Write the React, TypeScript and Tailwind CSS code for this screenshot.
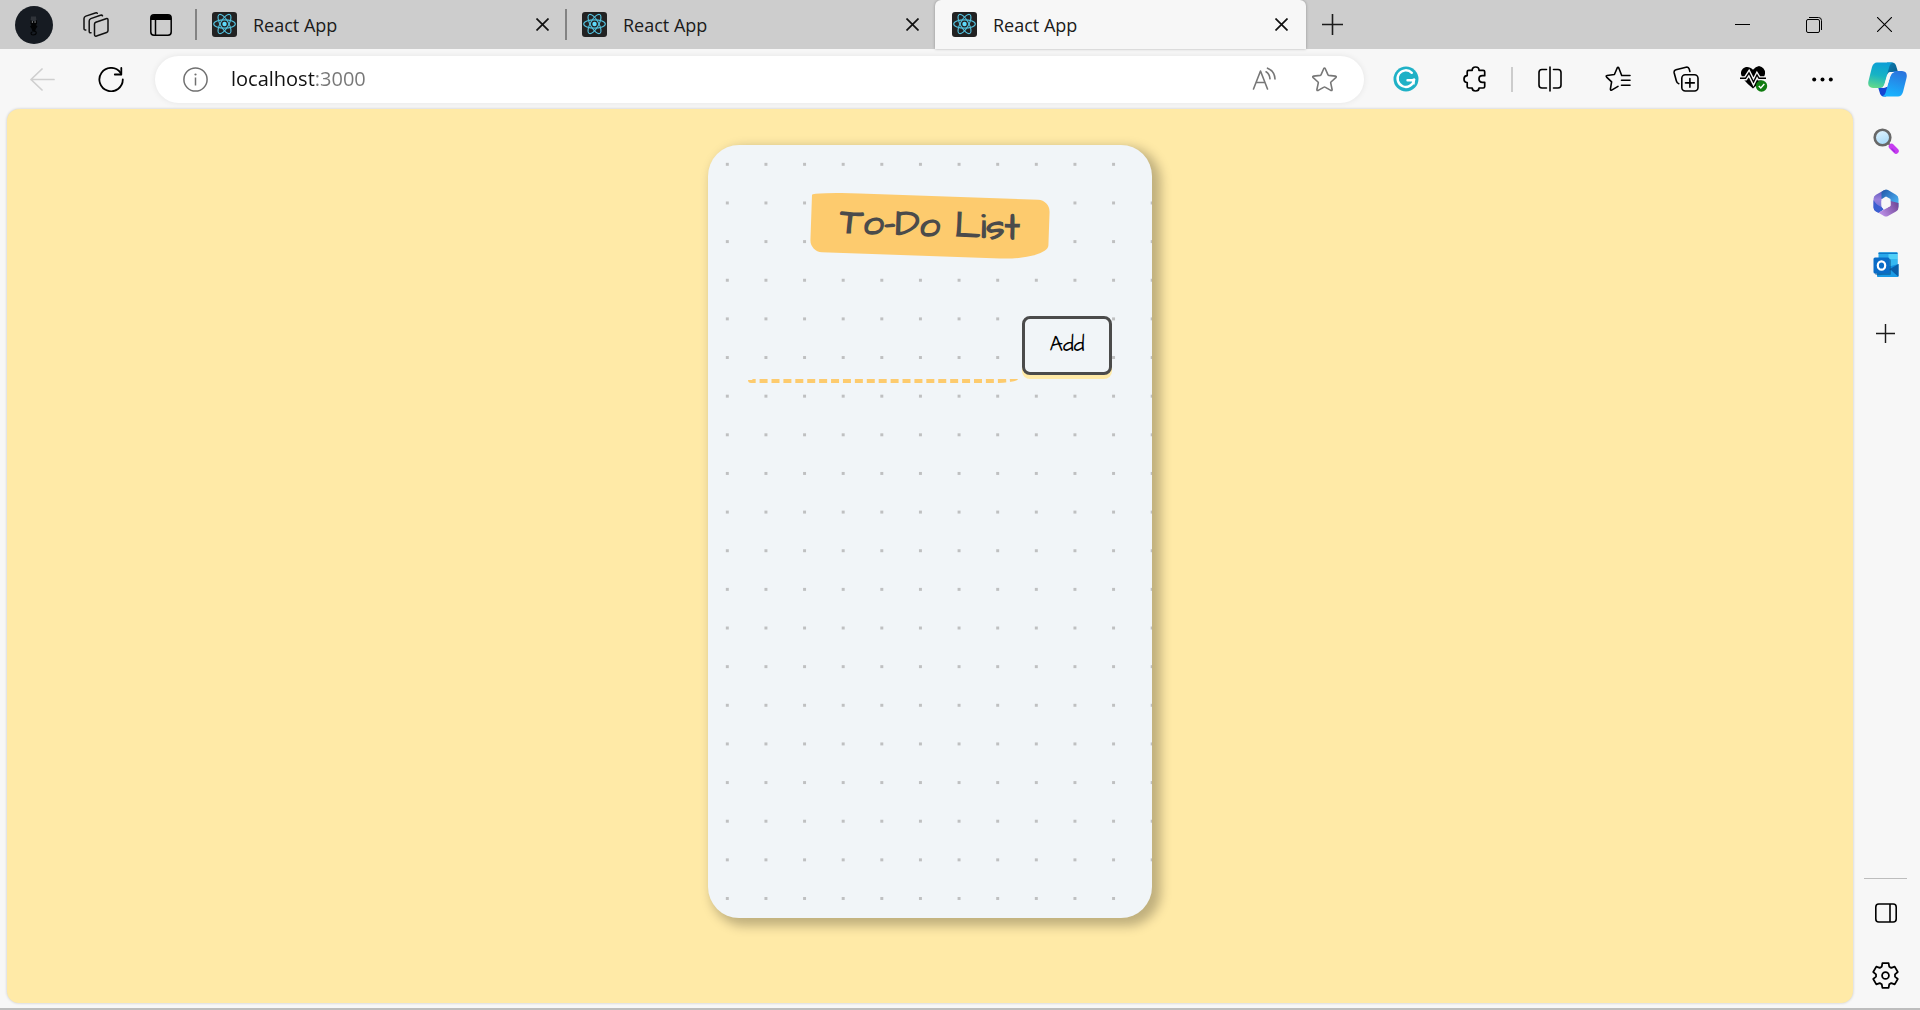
import React from "react";

type IconProps = { className?: string };

function ReactLogo() {
  return (
    <svg className="size-[25px] shrink-0" viewBox="0 0 25 25" fill="none" aria-hidden="true">
      <rect width="25" height="25" rx="3" fill="#222222" />
      <g stroke="#53c1de" strokeWidth="1.1">
        <ellipse cx="12.5" cy="12" rx="10.8" ry="4.1" />
        <ellipse cx="12.5" cy="12" rx="10.8" ry="4.1" transform="rotate(60 12.5 12)" />
        <ellipse cx="12.5" cy="12" rx="10.8" ry="4.1" transform="rotate(120 12.5 12)" />
      </g>
      <circle cx="12.5" cy="12" r="2.2" fill="#61dafb" />
    </svg>
  );
}

function Avatar() {
  return (
    <svg className="size-[38px]" viewBox="0 0 38 38" aria-hidden="true">
      <circle cx="19" cy="19" r="19" fill="#161b22" />
      <path d="M16 10.500h5l.5 5h-6z" fill="#30343a" />
      <path d="M15.500 14l1.500 1h3.500l1.500-1v3.500l-1 1.500 1.500 1.500-1.500 2-1 3h-2.500l-1-3-1.500-2 1.500-1.500-1-1.500z" fill="#030405" />
      <path d="M18.500 25c4 0 3.500 4-.500 4-2.500 0-2.500-3-.500-3" fill="none" stroke="#030405" strokeWidth="1.200" />
      <path d="M16.800 16h1.200M19.500 16h1.200" stroke="#c9ccd0" />
    </svg>
  );
}

function WorkspacesIcon() {
  return (
    <svg className="h-[25px] w-[26px]" viewBox="0 0 26 25" fill="none" stroke="#111" strokeWidth="1.5" strokeLinecap="round" strokeLinejoin="round" aria-hidden="true">
      <path d="M12.8 10.2L23 6.700Q25 6 25 8V18.500Q25 20 23.600 20.500L13.500 24Q11.500 24.600 11.500 22.600V12Q11.500 10.700 12.800 10.200Z" />
      <path d="M19.500 3.800Q19 2.800 17.500 3.300L7.800 6.600Q6.200 7.200 6.200 9V19.500Q6.200 21 8 20.800" />
      <path d="M14.300 1.300Q13.800.5 12.300 1L2.800 4.100Q1 4.700 1 6.500V16.500Q1 18.300 2.800 18" />
    </svg>
  );
}

function TabActionsIcon() {
  return (
    <svg className="size-[22px]" viewBox="0 0 22 22" fill="none" stroke="#000" strokeWidth="1.5" aria-hidden="true">
      <rect x="0.800" y="0.800" width="20.400" height="20.400" rx="3.200" />
      <path d="M5.500 6v15" />
      <path d="M1 6V4q0-3 3-3h14q3 0 3 3v2z" fill="#000" stroke="none" />
    </svg>
  );
}

function CrossIcon({ className = "size-[13px]" }: IconProps) {
  return (
    <svg className={className} viewBox="0 0 13 13" stroke="#111" strokeWidth="1.700" aria-hidden="true">
      <path d="M.5.5l12 12M12.500.5l-12 12" />
    </svg>
  );
}

function PlusIcon({ className = "size-[21px]" }: IconProps) {
  return (
    <svg className={className} viewBox="0 0 21 21" stroke="#1b1b1b" strokeWidth="1.600" aria-hidden="true">
      <path d="M10.500 0v21M0 10.500h21" />
    </svg>
  );
}

function BackIcon() {
  return (
    <svg className="size-[25px]" viewBox="0 0 25 25" fill="none" stroke="#cfcfcf" strokeWidth="1.700" strokeLinecap="round" strokeLinejoin="round" aria-hidden="true">
      <path d="M24 12.500H1M12 2L1 12.500 12 23" />
    </svg>
  );
}

function RefreshIcon() {
  return (
    <svg className="h-[25px] w-[26px]" viewBox="0 0 26 25" fill="none" stroke="#000" strokeWidth="1.800" strokeLinecap="round" strokeLinejoin="round" aria-hidden="true">
      <path d="M24.800 12.500A11.700 11.700 0 1 1 22.500 5.600L23 7.300" />
      <path d="M23.300 1V7.500H16.800" />
    </svg>
  );
}

function InfoIcon() {
  return (
    <svg className="size-[25px]" viewBox="0 0 25 25" fill="none" stroke="#707070" strokeWidth="1.500" aria-hidden="true">
      <circle cx="12.500" cy="12.500" r="11.600" />
      <path d="M12.500 10.500v8" />
      <circle cx="12.500" cy="7.500" r="1.100" fill="#707070" stroke="none" />
    </svg>
  );
}

function ReadAloudIcon() {
  return (
    <svg className="h-[24px] w-[25px]" viewBox="0 0 25 24" fill="none" stroke="#777" strokeWidth="1.600" strokeLinecap="round" strokeLinejoin="round" aria-hidden="true">
      <path d="M1.500 22L8.500 4l7 18M4 15.500h9" />
      <path d="M14 4.800q3.500 2 4 7" />
      <path d="M15.500 1.200Q22.500 4 23 12" />
    </svg>
  );
}

function StarIcon() {
  return (
    <svg className="size-[25px]" viewBox="0 0 25 25" fill="none" stroke="#777" strokeWidth="1.600" strokeLinejoin="round" aria-hidden="true">
      <path d="M11.700 1.700q.8-1.400 1.600 0l2.700 6.200q.2.400.7.500l6.700.7q1.500.3.400 1.500l-4.800 4.400q-.4.400-.3.900l1.400 6.600q.1 1.500-1.300.9L13 20.100q-.5-.3-1 0l-5.800 3.300q-1.400.6-1.300-.9l1.400-6.600q.1-.5-.3-.9L1.200 10.600q-1.100-1.200.4-1.500l6.700-.7q.5-.1.700-.5z" />
    </svg>
  );
}

function GrammarIcon() {
  return (
    <svg className="size-[26px]" viewBox="0 0 26 26" fill="none" aria-hidden="true">
      <circle cx="13" cy="13" r="12.500" fill="#1fb1c6" />
      <path d="M18.800 6.800A8.300 8.300 0 1 0 21 14.200H14.500" stroke="#fff" strokeWidth="2.400" strokeLinecap="round" />
      <path d="M17.500 14.500l3.500-1.500v5.500" stroke="#fff" strokeWidth="1.400" />
    </svg>
  );
}

function PuzzleIcon() {
  return (
    <svg className="h-[26px] w-[23px]" viewBox="0 0 23 26" fill="none" stroke="#000" strokeWidth="1.700" strokeLinejoin="round" aria-hidden="true">
      <path d="M5.700 4.300H9.200C9.200 2 10.600 1 12.600 1S16 2 16 4.300H20.200Q21.700 4.300 21.700 5.800V9.700H19.500C17.300 9.700 16 11 16 13S17.300 16.300 19.500 16.300H21.700V20.500Q21.700 22 20.200 22H16C16 24 14.500 25 12.600 25S9.200 24 9.200 22H5.700Q4.200 22 4.200 20.500V16.500C2 16.500 1 15 1 13S2 9.600 4.200 9.600V5.800Q4.200 4.300 5.700 4.300Z" />
    </svg>
  );
}

function SplitIcon() {
  return (
    <svg className="h-[26px] w-[24px]" viewBox="0 0 24 26" fill="none" stroke="#000" strokeWidth="1.600" strokeLinecap="round" aria-hidden="true">
      <path d="M12 1v24M8.500 3.500H4Q1 3.500 1 6.500V19Q1 22 4 22H8.500M15.500 3.500H20Q23 3.500 23 6.500V19Q23 22 20 22H15.500" />
    </svg>
  );
}

function FavoritesIcon() {
  return (
    <svg className="size-[26px]" viewBox="0 0 26 26" fill="none" stroke="#000" strokeWidth="1.600" strokeLinecap="round" strokeLinejoin="round" aria-hidden="true">
      <path d="M25 9.500h-8.300L13.800 2q-.8-1.500-1.600 0L9.400 8.500l-7.300 1q-1.600.3-.5 1.600l5 4.800-1.200 7.200q0 1.600 1.300 1l6.300-3.700M16.500 14.300H25M16.500 19.200H25" />
    </svg>
  );
}

function CollectionsIcon() {
  return (
    <svg className="size-[26px]" viewBox="0 0 26 26" fill="none" stroke="#000" strokeWidth="1.600" strokeLinecap="round" strokeLinejoin="round" aria-hidden="true">
      <rect x="8.800" y="8.800" width="16.200" height="16.200" rx="3.500" />
      <path d="M16.900 12.500v8.800M12.500 16.900h8.800" />
      <path d="M16.900 5.500L16.200 3Q15.500.6 13 1.200L3 3.800Q.6 4.500 1.200 7l2.200 8q.6 2.300 2.400 2.700" />
    </svg>
  );
}

function HealthIcon() {
  return (
    <svg className="h-[26px] w-[28px]" viewBox="0 0 28 26" fill="none" aria-hidden="true">
      <path d="M13 3.800C8-1.500.5 1.500 1 8q.4 5 12 14.500Q24.600 13 25 8 25.500 1.500 19-.0 15.500.5 13 3.800Z" fill="#000" />
      <path d="M0 12.300h5.500L9 7l4.500 9L17 9l2 3.300H26" stroke="#f7f7f7" strokeWidth="4.200" />
      <path d="M0 12.300h5.500L9 7l4.500 9L17 9l2 3.300H26" stroke="#000" strokeWidth="1.400" />
      <circle cx="21.500" cy="20" r="5.700" fill="#107c10" />
      <path d="M18.800 20l2 2 3.500-4" stroke="#fff" strokeWidth="1.400" />
    </svg>
  );
}

function DotsIcon() {
  return (
    <svg className="h-[5px] w-[21px]" viewBox="0 0 21 5" fill="#000" aria-hidden="true">
      <circle cx="2.200" cy="2.500" r="2" />
      <circle cx="10.500" cy="2.500" r="2" />
      <circle cx="18.800" cy="2.500" r="2" />
    </svg>
  );
}

function CopilotIcon() {
  return (
    <svg className="h-[35px] w-[39px]" viewBox="0 0 39 35" aria-hidden="true">
      <defs>
        <linearGradient id="cp-a" x1="0.500" y1="0" x2="0.300" y2="1">
          <stop offset="0" stopColor="#0c9fd6" />
          <stop offset="0.500" stopColor="#17b3c4" />
          <stop offset="1" stopColor="#62d98a" />
        </linearGradient>
        <linearGradient id="cp-b" x1="0.700" y1="0" x2="0.400" y2="1">
          <stop offset="0" stopColor="#2b74dd" />
          <stop offset="1" stopColor="#18b4ff" />
        </linearGradient>
        <linearGradient id="cp-c" x1="0" y1="0" x2="1" y2="1">
          <stop offset="0" stopColor="#0b7fb4" />
          <stop offset="1" stopColor="#0b5a86" />
        </linearGradient>
      </defs>
      <path d="M19 .5h5q3 0 4 3l2 6.500h-7q-3 0-4 3z" fill="url(#cp-c)" />
      <path d="M10 25h11l-3 9.500h-2q-3 0-4-3z" fill="#1546d2" />
      <path d="M9 .5h16q-2.500.5-3.500 3.500L16.500 22q-1 4-5 4H5q-6-.5-4.500-7L4 5Q5.500.5 9 .5Z" fill="url(#cp-a)" />
      <path d="M30 34.500H14q2.500-.5 3.500-3.500L22.500 13q1-4 5-4H34q6 .5 4.500 7L35 30Q33.500 34.500 30 34.500Z" fill="url(#cp-b)" />
      <path d="M22.500 10h4q-3 1-4 4l-3 9q-1 3-4 3h-3q3-.5 4-3.500l3-9.500q1-3 3-3Z" fill="#f7f7f7" />
    </svg>
  );
}

function SearchIcon() {
  return (
    <svg className="size-[26px]" viewBox="0 0 26 26" fill="none" aria-hidden="true">
      <defs>
        <linearGradient id="lens" x1="0" y1="0" x2="0.300" y2="1">
          <stop offset="0" stopColor="#e6f6ff" />
          <stop offset="1" stopColor="#a9daf8" />
        </linearGradient>
      </defs>
      <path d="M14.500 14.500l4 4" stroke="#777" strokeWidth="2" />
      <path d="M18.500 18.500l4.500 4.500" stroke="#c63df0" strokeWidth="5.500" strokeLinecap="round" />
      <path d="M19 21l2.500 2.500" stroke="#a42be0" strokeWidth="1.500" strokeLinecap="round" />
      <circle cx="9.500" cy="9.500" r="7.800" fill="url(#lens)" stroke="#686868" strokeWidth="2.600" />
    </svg>
  );
}

function OfficeIcon() {
  return (
    <svg className="h-[28px] w-[26px]" viewBox="0 0 26 28" aria-hidden="true">
      <defs>
        <linearGradient id="of-a" x1="0" y1="0" x2="0" y2="1">
          <stop offset="0" stopColor="#5a55b8" />
          <stop offset="0.400" stopColor="#9a80dc" />
          <stop offset="1" stopColor="#5a6fd6" />
        </linearGradient>
        <linearGradient id="of-b" x1="0" y1="0" x2="1" y2="1">
          <stop offset="0" stopColor="#2357a6" />
          <stop offset="0.600" stopColor="#3f96de" />
          <stop offset="1" stopColor="#4cc3f5" />
        </linearGradient>
        <linearGradient id="of-c" x1="0" y1="0.500" x2="1" y2="0">
          <stop offset="0" stopColor="#b88be2" />
          <stop offset="1" stopColor="#6a4090" />
        </linearGradient>
      </defs>
      <path d="M11 1.200L3 5.800Q.5 7.300.5 10v8.500Q.5 21 3 22.500l2.500 1.300 5-3.300-2-2.500V10l2-1z" fill="url(#of-a)" />
      <path d="M.5 11Q3 16 8.500 18l2 2.500-5 3.300L3 22.500Q.5 21 .5 18.500Z" fill="#3b5fd0" />
      <path d="M13 .5q1 0 2 .6l8 4.700Q25.500 7.300 25.500 10v8L17.500 13V10L13 7.500 8.500 10V3q2.500-2.500 4.500-2.500Z" fill="url(#of-b)" />
      <path d="M25.500 14v4.500q0 2.700-2.500 4l-8 4.600q-2 1-4 0L5.500 23.800 17.500 17V12z" fill="url(#of-c)" />
      <path d="M13 9.300l4 2.300v5L13 18.900l-4-2.300v-5z" fill="#f7f7f7" stroke="#f7f7f7" strokeLinejoin="round" />
    </svg>
  );
}

function OutlookIcon() {
  return (
    <svg className="size-[26px]" viewBox="0 0 26 26" aria-hidden="true">
      <rect x="5.500" y="0.500" width="19" height="14" rx="1" fill="#28a8ea" />
      <path d="M6.500.5h17q1 0 1 1V7h-9V1.500h-9z" fill="#50d0f8" />
      <path d="M5.500.5h19V2h-19z" fill="#0f78c8" />
      <path d="M15.500 7h9v7h-9z" fill="#35b8f1" />
      <path d="M4 14h14l7.500-2v12q0 1-1 1H5q-1 0-1-1z" fill="#1490df" />
      <path d="M25.500 12v12.500L16 17.500z" fill="#0a5ea8" />
      <path d="M4 25l14-7 7 7z" fill="#1a9be6" />
      <rect x="2" y="7" width="16" height="16" rx="1.500" fill="#0a4a80" opacity="0.500" />
      <rect x="0.500" y="5.500" width="16" height="16" rx="1.500" fill="#0a6cc7" />
      <ellipse cx="8.500" cy="13.500" rx="3.700" ry="4.200" fill="none" stroke="#fff" strokeWidth="2.200" />
    </svg>
  );
}

function SidePanelIcon() {
  return (
    <svg className="h-[20px] w-[22px]" viewBox="0 0 22 20" fill="none" stroke="#000" strokeWidth="1.600" aria-hidden="true">
      <rect x="0.800" y="1" width="20.400" height="18" rx="3" />
      <path d="M15 1v18" />
    </svg>
  );
}

const gearPoints = [0, 60, 120, 180, 240, 300]
  .flatMap((tooth) =>
    [
      [-23, 9.2],
      [-14, 12.3],
      [14, 12.3],
      [23, 9.2],
    ].map(([offset, radius]) => {
      const angle = ((tooth + offset - 90) * Math.PI) / 180;
      return `${(13 + radius * Math.cos(angle)).toFixed(2)},${(13 + radius * Math.sin(angle)).toFixed(2)}`;
    })
  )
  .join(" ");

function GearIcon() {
  return (
    <svg className="size-[27px]" viewBox="0 0 26 26" fill="none" stroke="#000" strokeWidth="1.700" strokeLinejoin="round" aria-hidden="true">
      <polygon points={gearPoints} />
      <circle cx="13" cy="13" r="3.300" />
    </svg>
  );
}

function IconButton({ label, className, children }: { label: string; className: string; children: React.ReactNode }) {
  return (
    <button type="button" aria-label={label} className={`flex shrink-0 items-center justify-center ${className}`}>
      {children}
    </button>
  );
}

function Tab({ active = false }: { active?: boolean }) {
  return (
    <div
      role="tab"
      aria-selected={active}
      className={
        active
          ? "flex h-full w-[371px] items-center rounded-t-md bg-[#f7f7f7] pr-[18px] shadow-[0_0_3px_rgba(0,0,0,0.3)]"
          : "flex h-full w-[370px] items-center pr-4"
      }
    >
      <div className={active ? "h-[31px] w-[2px]" : "h-[31px] w-[2px] bg-[#838383]"} />
      <div className="ml-[15px] flex flex-1 items-center gap-4">
        <ReactLogo />
        <span className="text-lg leading-6 text-[#1b1b1b]">React App</span>
      </div>
      <IconButton label="Close tab" className="size-[14px]">
        <CrossIcon />
      </IconButton>
    </div>
  );
}

function TabStrip() {
  return (
    <header className="flex h-[49px] items-center bg-[#cdcdcd]">
      <IconButton label="Profile" className="ml-[15px] size-[38px]">
        <Avatar />
      </IconButton>
      <IconButton label="Workspaces" className="ml-[30px] w-[26px]">
        <WorkspacesIcon />
      </IconButton>
      <IconButton label="Tab actions" className="ml-[41px] w-[22px]">
        <TabActionsIcon />
      </IconButton>
      <div role="tablist" className="ml-[23px] flex h-full">
        <Tab />
        <Tab />
        <Tab active />
      </div>
      <IconButton label="New tab" className="ml-4 w-[21px]">
        <PlusIcon />
      </IconButton>
      <div className="ml-auto flex">
        <IconButton label="Minimize" className="h-10 w-[71px]">
          <svg className="h-[15px] w-[15px]" viewBox="0 0 15 15" stroke="#000" aria-hidden="true">
            <path d="M0 7.500h15" />
          </svg>
        </IconButton>
        <IconButton label="Restore" className="h-10 w-[71px]">
          <svg className="size-[16px]" viewBox="0 0 16 16" fill="none" stroke="#000" aria-hidden="true">
            <rect x="0.500" y="2.500" width="13" height="13" rx="1.500" />
            <path d="M3 .5h9.500q3 0 3 3V13" />
          </svg>
        </IconButton>
        <IconButton label="Close window" className="h-10 w-[71px]">
          <svg className="size-[15px]" viewBox="0 0 15 15" stroke="#000" strokeWidth="1.100" aria-hidden="true">
            <path d="M0 0l15 15M15 0L0 15" />
          </svg>
        </IconButton>
      </div>
    </header>
  );
}

function Toolbar() {
  return (
    <div className="flex h-[60px] items-center">
      <IconButton label="Back" className="ml-[30px] w-[25px]">
        <BackIcon />
      </IconButton>
      <IconButton label="Refresh" className="ml-[43px] w-[26px]">
        <RefreshIcon />
      </IconButton>
      <div className="ml-[31px] flex h-[47px] flex-1 items-center rounded-full bg-white pr-[27px] pl-7 shadow-[0_0_6px_rgba(0,0,0,0.08)]">
        <IconButton label="Site information" className="w-[25px]">
          <InfoIcon />
        </IconButton>
        <input
          aria-label="Address"
          defaultValue="localhost:3000"
          className="ml-[23px] min-w-0 flex-1 bg-[linear-gradient(90deg,#111_0_84px,#777_84px)] bg-clip-text text-xl leading-8 text-transparent outline-none"
        />
        <IconButton label="Read aloud" className="w-[25px]">
          <ReadAloudIcon />
        </IconButton>
        <IconButton label="Add to favorites" className="ml-[35px] w-[25px]">
          <StarIcon />
        </IconButton>
      </div>
      <div className="mr-[2px] ml-2 flex items-center">
        <IconButton label="Writing assistant" className="h-12 w-[68px]"><GrammarIcon /></IconButton>
        <IconButton label="Extensions" className="h-12 w-[68px]"><PuzzleIcon /></IconButton>
        <div className="mx-[3px] h-[25px] w-[2px] bg-[#cccccc]" />
        <IconButton label="Split screen" className="h-12 w-[68px]"><SplitIcon /></IconButton>
        <IconButton label="Favorites" className="h-12 w-[68px]"><FavoritesIcon /></IconButton>
        <IconButton label="Collections" className="h-12 w-[68px]"><CollectionsIcon /></IconButton>
        <IconButton label="Browser essentials" className="h-12 w-[68px]"><HealthIcon /></IconButton>
        <IconButton label="Settings and more" className="h-12 w-[68px]"><DotsIcon /></IconButton>
        <IconButton label="Copilot" className="h-12 w-[62px]"><CopilotIcon /></IconButton>
      </div>
    </div>
  );
}

function Sidebar() {
  return (
    <aside className="flex w-[67px] flex-col items-center pt-px pr-[2px]">
      <IconButton label="Search" className="h-[62px] w-full"><SearchIcon /></IconButton>
      <IconButton label="Microsoft 365" className="h-[62px] w-full"><OfficeIcon /></IconButton>
      <IconButton label="Outlook" className="h-[62px] w-full"><OutlookIcon /></IconButton>
      <IconButton label="Customize sidebar" className="mt-[6px] h-[62px] w-full"><PlusIcon className="size-[19px]" /></IconButton>
      <hr className="mt-auto w-[43px] border-[#bdbdbd]" />
      <IconButton label="Hide sidebar" className="mt-[3px] h-[62px] w-full"><SidePanelIcon /></IconButton>
      <IconButton label="Settings" className="mb-[2px] h-[62px] w-full"><GearIcon /></IconButton>
    </aside>
  );
}

function TodoCard() {
  return (
    <section className="min-h-[773px] w-full max-w-[444px] rounded-[31px] bg-[#f1f5f8] bg-[radial-gradient(#bfc0c1_7.2%,transparent_0)] bg-[length:8.7%_5%] px-10 pt-[51px] font-['Architects_Daughter',Lato,cursive] shadow-[6px_5px_11px_3px_#00000040]">
      <div className="flex justify-center">
        <h1 className="rotate-2 rounded-[20%_5%_20%_5%/5%_20%_25%_20%] bg-[#fdcb6e] px-[29px] py-[6px] text-[37px] leading-[48px] font-bold text-[#4b4b4b]">
          To-Do List
        </h1>
      </div>
      <form className="mt-[60px] flex items-start gap-1" onSubmit={(e) => e.preventDefault()}>
        <input
          aria-label="New item"
          className="h-[67px] min-w-0 flex-1 rounded-bl-[3px] border-b-4 border-dashed border-[#fdcb6e] bg-transparent p-1.5 text-2xl text-[#4b4b4b] outline-none [border-bottom-right-radius:24px_4px]"
        />
        <button
          type="submit"
          className="h-[59px] w-[90px] rounded-lg border-3 border-[#4b4b4b] bg-[#f1f5f8] pb-0.5 text-[21px] text-black shadow-[0_4px_0_#ffeaa7]"
        >
          Add
        </button>
      </form>
    </section>
  );
}

export default function App() {
  return (
    <div className="flex min-h-screen flex-col border-b-2 border-[#bdbdbd] bg-[#f7f7f7] font-['Segoe_UI','Open_Sans',sans-serif]">
      <TabStrip />
      <Toolbar />
      <div className="flex flex-1">
        <main className="mb-[5px] ml-[7px] flex flex-1 items-start justify-center rounded-xl bg-[#ffeaa7] pt-9 shadow-[0_0_3px_rgba(0,0,0,0.2)]">
          <TodoCard />
        </main>
        <Sidebar />
      </div>
    </div>
  );
}
